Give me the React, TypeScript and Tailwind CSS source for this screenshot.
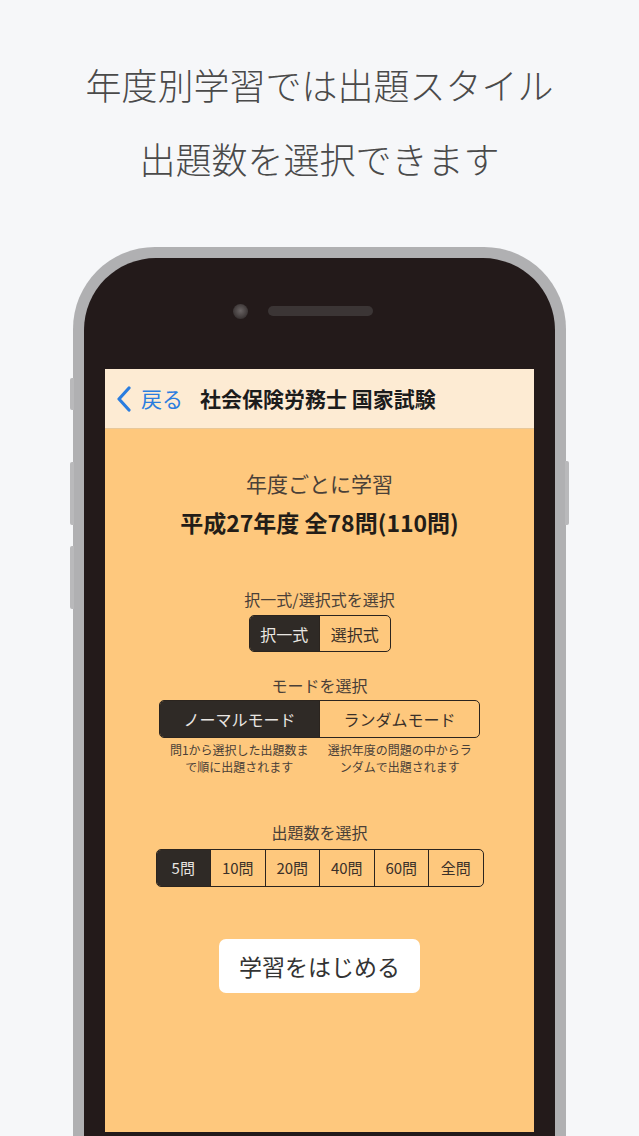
import React from "react";

const font = { fontFamily: '"Noto Sans CJK JP", "Noto Sans", sans-serif' };

function Seg({ items, selected, widthClass, textClass }: { items: string[]; selected: number; widthClass: string; textClass: string }) {
  return (
    <div className={`flex ${widthClass} h-full rounded-[5px] border border-[#2b241e] overflow-hidden`}>
      {items.map((t, i) => (
        <div
          key={t}
          className={`flex-1 flex items-center justify-center ${textClass} ${i > 0 ? "border-l border-[#2b241e]" : ""} ${
            i === selected ? "bg-[#2f2a26] text-[#e9e6e2]" : "text-[#3a3029]"
          }`}
        >
          {t}
        </div>
      ))}
    </div>
  );
}

export default function App() {
  return (
    <div className="w-[639px] h-[1136px] bg-[#f6f7f9] overflow-hidden flex flex-col items-center" style={font}>
      <div className="pt-[47px] text-center text-[36px] leading-[74px] font-light text-[#4a4a4a] tracking-[0px]">
        <div>年度別学習では出題スタイル</div>
        <div>出題数を選択できます</div>
      </div>

      <div className="relative mt-[52px] w-[493px] shrink-0">
        {/* side buttons */}
        <div className="absolute left-[-3px] top-[131px] w-[4px] h-[32px] rounded-l-[2px] bg-[#b9b9bb]" />
        <div className="absolute left-[-3px] top-[215px] w-[4px] h-[63px] rounded-l-[2px] bg-[#b9b9bb]" />
        <div className="absolute left-[-3px] top-[299px] w-[4px] h-[63px] rounded-l-[2px] bg-[#b9b9bb]" />
        <div className="absolute right-[-3px] top-[214px] w-[4px] h-[64px] rounded-r-[2px] bg-[#b9b9bb]" />

        <div className="rounded-t-[82px] bg-[#b0b0b2] px-[11px] pt-[11px] h-[900px]">
          <div className="rounded-t-[72px] bg-[#231a1a] h-full px-[21px] flex flex-col">
            <div className="h-[111px] flex items-start justify-center pt-[46px] pr-[34px] gap-[20px]">
              <div className="w-[15px] h-[15px] rounded-full bg-[radial-gradient(circle_at_50%_45%,#6a6464,#3a3434_70%)]" />
              <div className="mt-[2px] w-[105px] h-[10px] rounded-full bg-[#3b3535]" />
            </div>

            <div className="w-[429px] h-[763px] bg-[#fec87d] flex flex-col items-center">
              {/* nav */}
              <div className="w-full h-[60px] bg-[#fdebd3] border-b border-[#e8c89a] flex items-center shrink-0">
                <svg width="16" height="26" viewBox="0 0 16 26" className="ml-[11px]">
                  <path d="M13 2 L3 13 L13 24" fill="none" stroke="#2a7ddf" strokeWidth="3.2" strokeLinecap="round" strokeLinejoin="round" />
                </svg>
                <span className="ml-[9px] text-[21px] text-[#2a7ddf] leading-none">戻る</span>
                <span className="ml-[17px] text-[21px] font-bold text-[#1c1c1c] leading-none">社会保険労務士 国家試験</span>
              </div>

              <div className="pt-[40px] text-[21px] leading-[28px] text-[#4a4038]">年度ごとに学習</div>
              <div className="mt-[11px] text-[23px] leading-[28px] font-bold text-[#231d18]">平成27年度 全78問(110問)</div>

              <div className="mt-[53px] text-[16px] leading-[20px] text-[#4a4038]">択一式/選択式を選択</div>
              <div className="mt-[6px] h-[37px]">
                <Seg items={["択一式", "選択式"]} selected={0} widthClass="w-[142px]" textClass="text-[16px]" />
              </div>

              <div className="mt-[23px] text-[16px] leading-[20px] text-[#4a4038]">モードを選択</div>
              <div className="mt-[5px] h-[38px]">
                <Seg items={["ノーマルモード", "ランダムモード"]} selected={0} widthClass="w-[321px]" textClass="text-[16px]" />
              </div>
              <div className="mt-[3px] w-[321px] flex text-[12px] leading-[17px] text-[#4a4038] text-center">
                <div className="flex-1">問1から選択した出題数ま<br />で順に出題されます</div>
                <div className="flex-1">選択年度の問題の中からラ<br />ンダムで出題されます</div>
              </div>

              <div className="mt-[47px] text-[16px] leading-[20px] text-[#4a4038]">出題数を選択</div>
              <div className="mt-[7px] h-[38px]">
                <Seg items={["5問", "10問", "20問", "40問", "60問", "全問"]} selected={0} widthClass="w-[328px]" textClass="text-[15px]" />
              </div>

              <div className="mt-[52px] w-[201px] h-[54px] rounded-[7px] bg-white flex items-center justify-center text-[23px] text-[#333]">
                学習をはじめる
              </div>
            </div>
          </div>
        </div>
      </div>
    </div>
  );
}
